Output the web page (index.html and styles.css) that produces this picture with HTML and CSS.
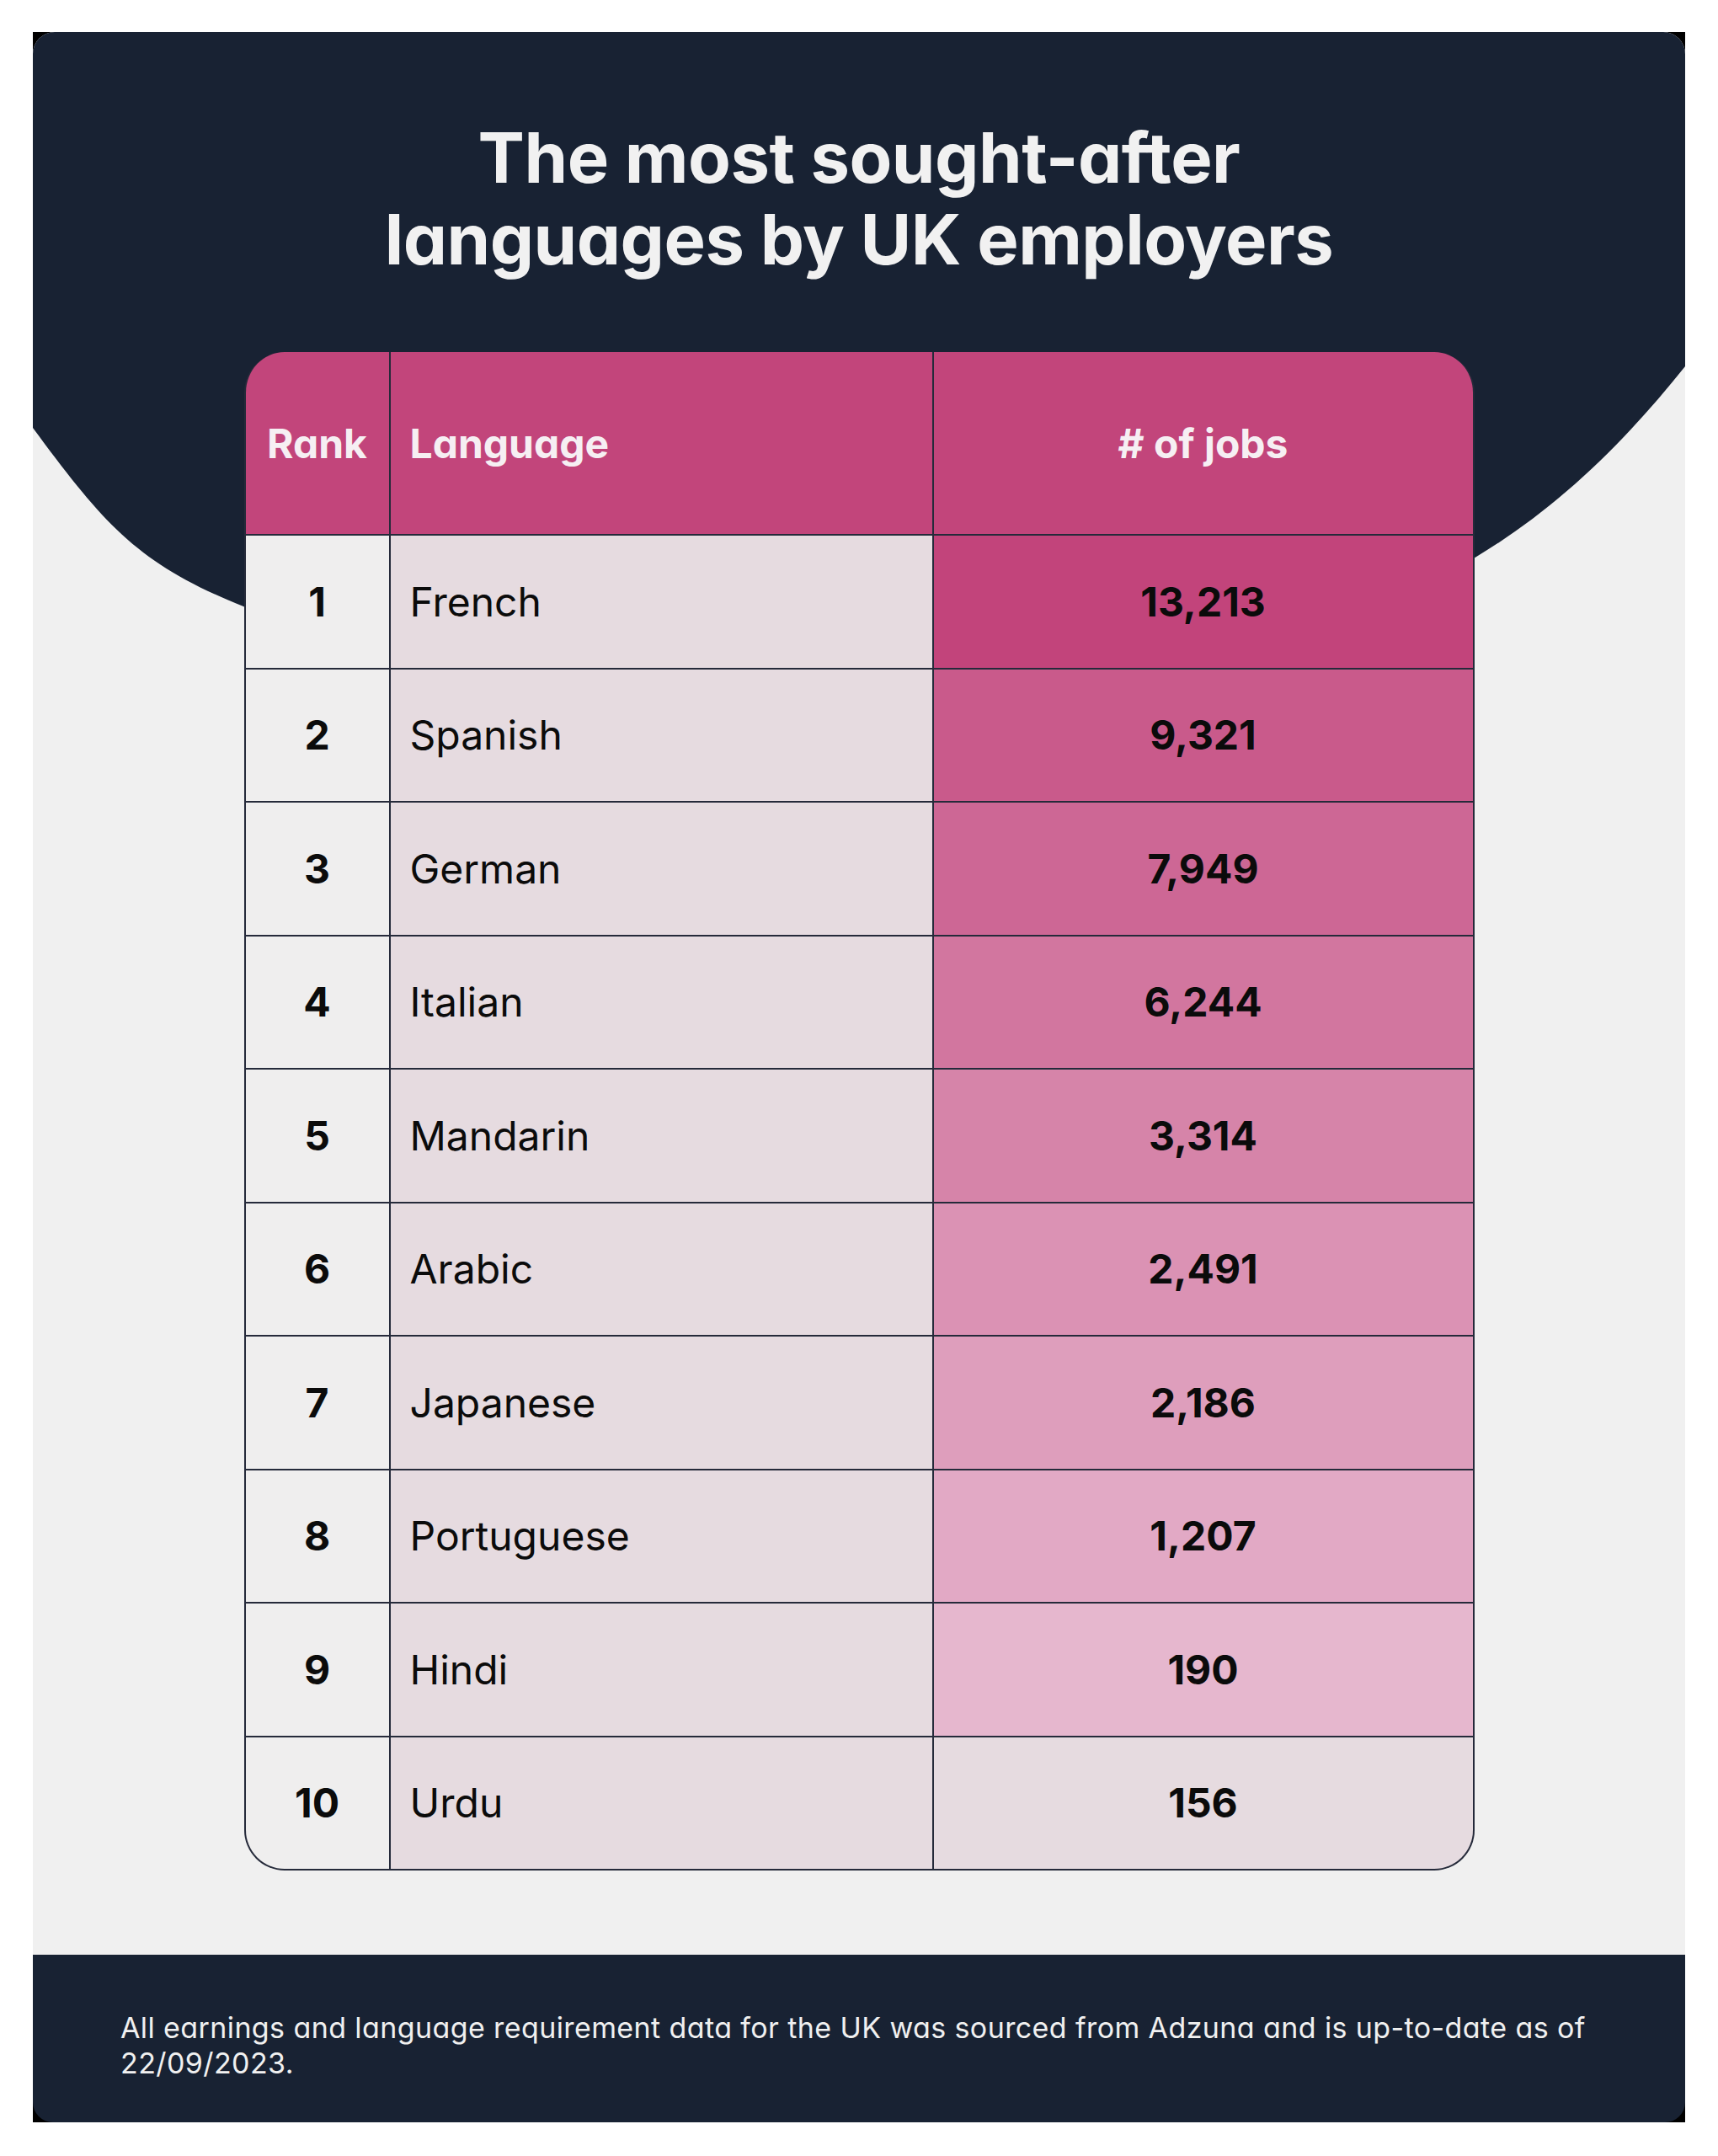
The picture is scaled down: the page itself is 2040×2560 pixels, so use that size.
FILE: index.html
```html
<!DOCTYPE html>
<html lang="en">
<head>
<meta charset="utf-8">
<title>The most sought-after languages by UK employers</title>
<link rel="stylesheet" href="styles.css">
</head>
<body>
<div class="sheet">
  <main class="main">
    <svg class="blob" viewBox="0 0 1962 900" width="1962" height="900" aria-hidden="true">
      <path d="M0,0 H1962 V397 C1882,497 1803,570 1711,625 C1300,860 600,880 250,682 C125,632 85,585 0,470 Z" fill="#182233"/>
    </svg>
    <h1 class="title">The most sought-after<br>languages by UK employers</h1>
    <div class="table" role="table">
      <div class="cell head rank" role="columnheader">Rank</div>
      <div class="cell head lang" role="columnheader">Language</div>
      <div class="cell head jobs" role="columnheader"># of jobs</div>

      <div class="cell rank">1</div><div class="cell lang">French</div><div class="cell jobs heat-1">13,213</div>
      <div class="cell rank">2</div><div class="cell lang">Spanish</div><div class="cell jobs heat-2">9,321</div>
      <div class="cell rank">3</div><div class="cell lang">German</div><div class="cell jobs heat-3">7,949</div>
      <div class="cell rank">4</div><div class="cell lang">Italian</div><div class="cell jobs heat-4">6,244</div>
      <div class="cell rank">5</div><div class="cell lang">Mandarin</div><div class="cell jobs heat-5">3,314</div>
      <div class="cell rank">6</div><div class="cell lang">Arabic</div><div class="cell jobs heat-6">2,491</div>
      <div class="cell rank">7</div><div class="cell lang">Japanese</div><div class="cell jobs heat-7">2,186</div>
      <div class="cell rank">8</div><div class="cell lang">Portuguese</div><div class="cell jobs heat-8">1,207</div>
      <div class="cell rank">9</div><div class="cell lang">Hindi</div><div class="cell jobs heat-9">190</div>
      <div class="cell rank">10</div><div class="cell lang">Urdu</div><div class="cell jobs heat-10">156</div>
    </div>
  </main>
  <footer class="footer">
    <p>All earnings and language requirement data for the UK was sourced from Adzuna and is up-to-date as of 22/09/2023.</p>
  </footer>
</div>
</body>
</html>
```

FILE: styles.css
```css
html, body {
  margin: 0;
  padding: 0;
  background: #ffffff;
}

.sheet {
  width: 1962px;
  height: 2482px;
  margin: 38px 0 0 39px;
  background: #000000;
  display: flex;
  flex-direction: column;
}

.main {
  position: relative;
  flex: 1;
  background: #f0f0f0;
  border-radius: 26px 26px 0 0;
  overflow: hidden;
  padding-top: 101px;
}

.blob {
  position: absolute;
  top: 0;
  left: 0;
  display: block;
}

.title {
  position: relative;
  margin: 0;
  text-align: center;
  color: #f1f1f1;
  font-family: Inter, "Noto Sans", sans-serif;
  font-weight: 700;
  font-size: 83px;
  line-height: 97px;
  letter-spacing: -0.5px;
  font-feature-settings: "cv11";
}

.table {
  position: relative;
  width: 1461px;
  box-sizing: border-box;
  margin: 85px auto 0;
  display: grid;
  grid-template-columns: 170px 643px 640px;
  grid-template-rows: 216px repeat(10, 156.5px);
  gap: 2px;
  background: #252a3a;
  border: 2px solid #252a3a;
  border-top: 0;
  border-radius: 48px;
  overflow: hidden;
}

.cell {
  display: flex;
  align-items: center;
  font-family: Inter, "Noto Sans", sans-serif;
  font-size: 48px;
  color: #0b0b0b;
}

.rank {
  justify-content: center;
  font-weight: 700;
  background: #efeeee;
}

.lang {
  padding-left: 23px;
  font-weight: 400;
  background: #e6dbe0;
}

.jobs {
  justify-content: center;
  font-weight: 700;
  background: #e6dbe0;
}

.head {
  background: #c2457b;
  color: #f6eff3;
  font-weight: 700;
  font-feature-settings: "cv11";
}

.heat-1 { background: #c2447b; }
.heat-2 { background: #c95a8b; }
.heat-3 { background: #cd6795; }
.heat-4 { background: #d2769f; }
.heat-5 { background: #d684a9; }
.heat-6 { background: #db92b4; }
.heat-7 { background: #de9ebc; }
.heat-8 { background: #e2a9c5; }
.heat-9 { background: #e6b7ce; }
.heat-10 { background: #e6dbe0; }

.footer {
  height: 199px;
  box-sizing: border-box;
  background: #182233;
  border-radius: 0 0 24px 24px;
  padding: 16px 104px 0;
  display: flex;
  align-items: center;
}

.footer p {
  margin: 0;
  color: #f0f0f0;
  font-family: Inter, "Noto Sans", sans-serif;
  font-weight: 400;
  font-size: 34px;
  line-height: 42px;
  letter-spacing: 0.4px;
  font-feature-settings: "cv11";
}
```
